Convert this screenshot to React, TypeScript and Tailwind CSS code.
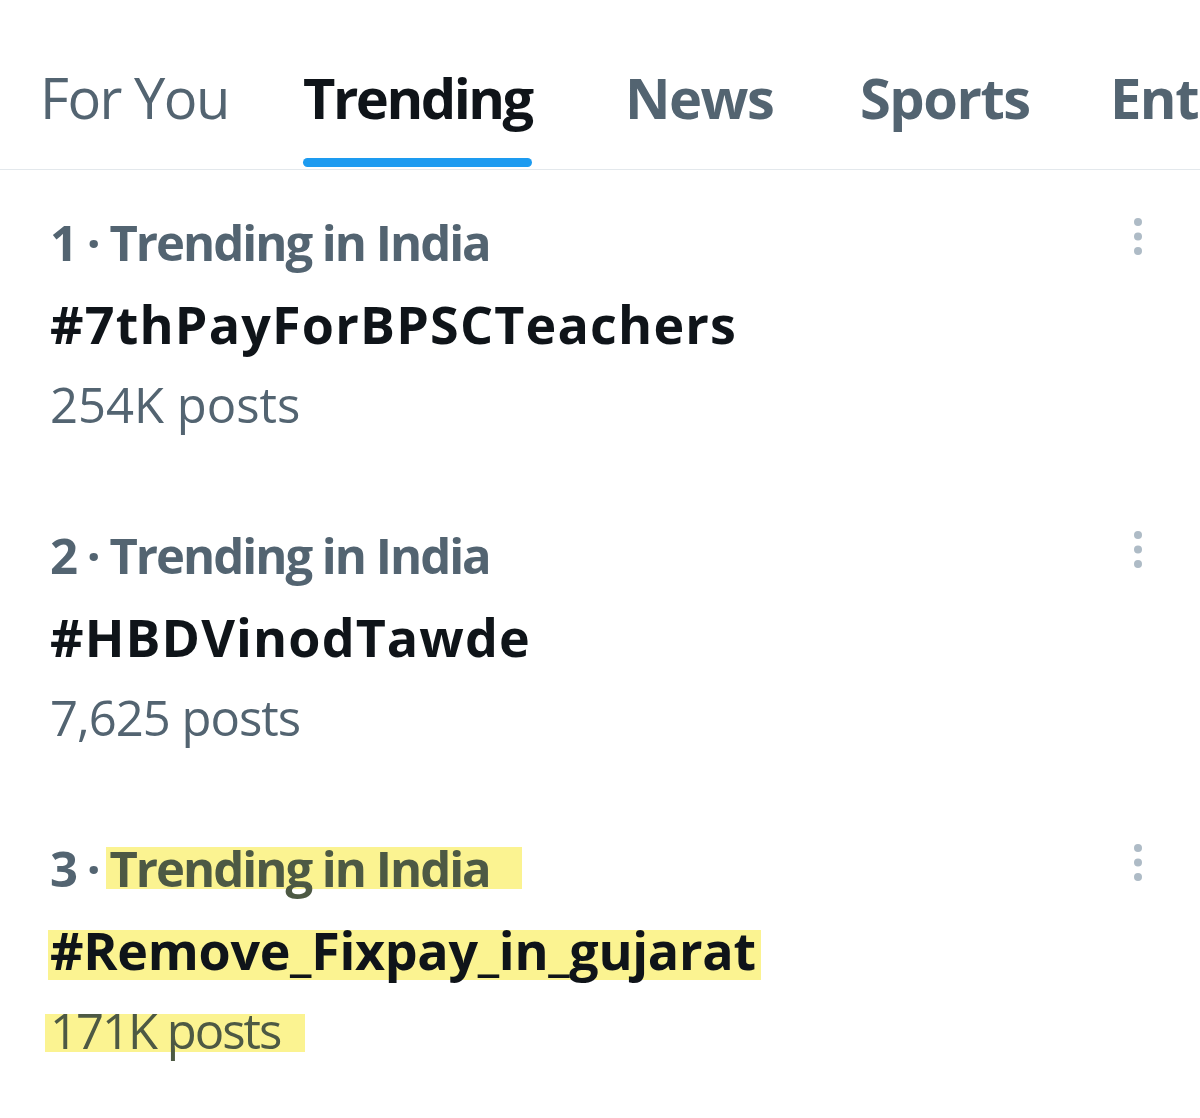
import React from 'react'

const font = { fontFamily: '"Open Sans", "Noto Sans", sans-serif' }

type Trend = { rank: number; label: string; tag: string; posts: string; tagTrack: string; postTrack: string; marked?: boolean }

const trends: Trend[] = [
  { rank: 1, label: 'Trending in India', tag: '#7thPayForBPSCTeachers', posts: '254K posts', tagTrack: 'tracking-[1.2px]', postTrack: 'tracking-[0px]' },
  { rank: 2, label: 'Trending in India', tag: '#HBDVinodTawde', posts: '7,625 posts', tagTrack: 'tracking-[1.1px]', postTrack: 'tracking-[-1px]' },
  { rank: 3, label: 'Trending in India', tag: '#Remove_Fixpay_in_gujarat', posts: '171K posts', tagTrack: 'tracking-[-0.3px]', postTrack: 'tracking-[-2px]', marked: true },
]

function Dots() {
  return (
    <svg width="10" height="40" viewBox="0 0 10 40" className="mt-[15px] shrink-0">
      <circle cx="5" cy="5" r="4" fill="#aebbc6" />
      <circle cx="5" cy="19.5" r="4" fill="#aebbc6" />
      <circle cx="5" cy="34" r="4" fill="#aebbc6" />
    </svg>
  )
}

function Tab({ label, w, active, weight }: { label: string; w: string; active?: boolean; weight: string }) {
  return (
    <div className={`${w} shrink-0 flex flex-col items-start`}>
      <div className="inline-flex flex-col">
        <span className={`text-[56px] leading-[70px] whitespace-nowrap ${weight} ${active ? 'text-[#0f1419] tracking-[-2.5px]' : 'text-[#536471] tracking-[-1.5px]'}`}>{label}</span>
        <div className={`mt-[26px] h-[9px] rounded-full ${active ? 'bg-[#1d9bf0]' : 'bg-transparent'}`} />
      </div>
    </div>
  )
}

export default function App() {
  return (
    <div className="w-[1200px] h-[1118px] bg-white overflow-hidden" style={font}>
      <div className="flex pl-[40px] pt-[62px] pb-[2px] border-b border-[#e3e8ec] overflow-hidden">
        <Tab label="For You" w="w-[263px]" weight="font-medium" />
        <Tab label="Trending" w="w-[322px]" weight="font-bold" active />
        <Tab label="News" w="w-[235px]" weight="font-bold" />
        <Tab label="Sports" w="w-[250px]" weight="font-bold" />
        <Tab label="Entertainment" w="w-[400px]" weight="font-bold" />
      </div>

      <div className="flex flex-col gap-[70px] pt-[32px]">
        {trends.map(t => (
          <div key={t.rank} className="flex justify-between pl-[50px] pr-[57px]">
            <div className="flex flex-col">
              <div className="text-[49px] leading-[81px] font-bold text-[#536471] tracking-[-2px] whitespace-nowrap">
                {t.rank} · {t.marked
                  ? <span className="inline-block bg-[#fbf391] text-[#4d5944] leading-[42px] pl-[3px] -ml-[3px] pr-[32px]">{t.label}</span>
                  : t.label}
              </div>
              <div className={`text-[52px] leading-[81px] font-bold text-[#0f1419] whitespace-nowrap ${t.tagTrack}`}>
                {t.marked
                  ? <span className="inline-block bg-[#fbf391] leading-[40px] pb-[10px] pl-[2px] -ml-[2px] pr-[5px]">{t.tag}</span>
                  : t.tag}
              </div>
              <div className={`text-[49px] leading-[81px] text-[#536471] whitespace-nowrap ${t.postTrack}`}>
                {t.marked
                  ? <span className="inline-block bg-[#fbf391] text-[#4d5944] leading-[32px] pb-[6px] pl-[5px] -ml-[5px] pr-[25px]">{t.posts}</span>
                  : t.posts}
              </div>
            </div>
            <Dots />
          </div>
        ))}
      </div>
    </div>
  )
}
